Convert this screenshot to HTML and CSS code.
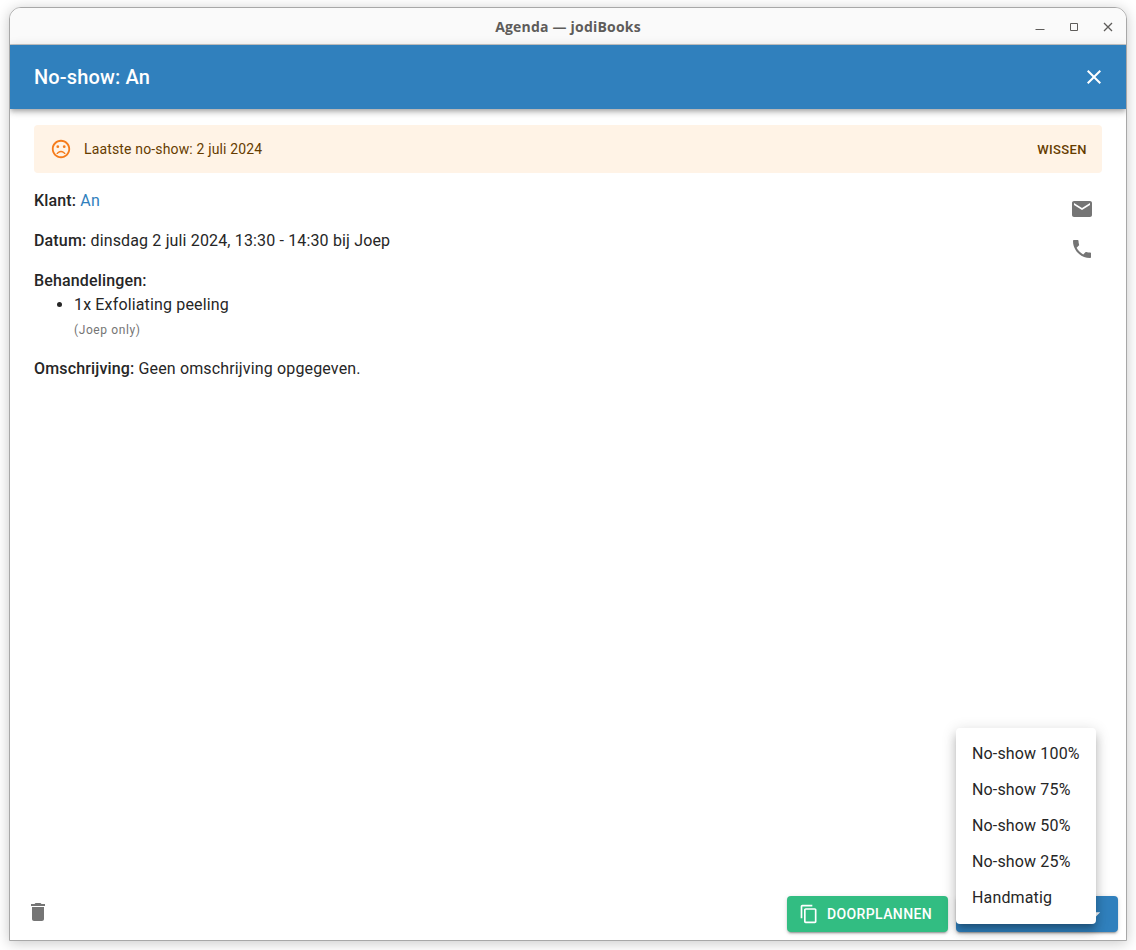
FILE: index.html
```html
<!DOCTYPE html>
<html lang="en">
<head>
  <meta charset="UTF-8">
  <meta name="viewport" content="width=device-width, initial-scale=1.0">
  <title>Agenda — jodiBooks</title>
  <link rel="stylesheet" href="styles.css">
</head>
<body>
  <div class="window">
    <!-- Title bar -->
    <div class="titlebar">
      <span class="titlebar-title">Agenda — jodiBooks</span>
      <div class="titlebar-controls">
        <svg class="win-icon" viewBox="0 0 10 10"><path d="M0.5 7.5h9" /></svg>
        <svg class="win-icon" viewBox="0 0 10 10"><path d="M1.5 1.5h7v7h-7z" /></svg>
        <svg class="win-icon win-close" viewBox="0 0 10 10"><path d="M1 1l8 8M9 1l-8 8" /></svg>
      </div>
    </div>

    <!-- Dialog header -->
    <header class="dialog-header">
      <h1>No-show: An</h1>
      <svg class="icon close-icon" viewBox="0 0 24 24"><path d="M19 6.41 17.59 5 12 10.59 6.41 5 5 6.41 10.59 12 5 17.59 6.41 19 12 13.41 17.59 19 19 17.59 13.41 12z" /></svg>
    </header>

    <main class="dialog-content">
      <div class="alert">
        <svg class="icon alert-icon" viewBox="0 0 24 24">
          <circle cx="15.5" cy="9.5" r="1.5" />
          <circle cx="8.5" cy="9.5" r="1.5" />
          <path d="M12 14c-2.33 0-4.32 1.45-5.12 3.5h1.67c.69-1.19 1.97-2 3.45-2s2.75.81 3.45 2h1.67c-.8-2.05-2.79-3.5-5.12-3.5zm-.01-12C6.47 2 2 6.48 2 12s4.47 10 9.99 10C17.52 22 22 17.52 22 12S17.52 2 11.99 2zM12 20c-4.42 0-8-3.58-8-8s3.58-8 8-8 8 3.58 8 8-3.58 8-8 8z" />
        </svg>
        <span class="alert-text">Laatste no-show: 2 juli 2024</span>
        <span class="alert-action">Wissen</span>
      </div>

      <div class="details">
        <div class="details-text">
          <p><strong>Klant:</strong> <a href="#">An</a></p>
          <p><strong>Datum:</strong> dinsdag 2 juli 2024, 13:30 - 14:30 bij Joep</p>
          <div class="treatments">
            <strong>Behandelingen:</strong>
            <ul>
              <li>1x Exfoliating peeling<small>(Joep only)</small></li>
            </ul>
          </div>
          <p><strong>Omschrijving:</strong> Geen omschrijving opgegeven.</p>
        </div>
        <div class="details-actions">
          <svg class="icon grey-icon" viewBox="0 0 24 24"><path d="M20 4H4c-1.1 0-1.99.9-1.99 2L2 18c0 1.1.9 2 2 2h16c1.1 0 2-.9 2-2V6c0-1.1-.9-2-2-2zm0 4l-8 5-8-5V6l8 5 8-5v2z" /></svg>
          <svg class="icon grey-icon" viewBox="0 0 24 24"><path d="M6.62 10.79c1.44 2.83 3.76 5.14 6.59 6.59l2.2-2.2c.27-.27.67-.36 1.02-.24 1.12.37 2.33.57 3.57.57.55 0 1 .45 1 1V20c0 .55-.45 1-1 1-9.39 0-17-7.61-17-17 0-.55.45-1 1-1h3.5c.55 0 1 .45 1 1 0 1.25.2 2.45.57 3.57.11.35.03.74-.25 1.02l-2.2 2.2z" /></svg>
        </div>
      </div>
    </main>

    <!-- Footer buttons -->
    <footer class="dialog-footer">
      <svg class="icon grey-icon trash-icon" viewBox="0 0 24 24"><path d="M6 19c0 1.1.9 2 2 2h8c1.1 0 2-.9 2-2V7H6v12zM19 4h-3.5l-1-1h-5l-1 1H5v2h14V4z" /></svg>
      <div class="footer-buttons">
        <button class="btn btn-green" type="button">
          <svg class="icon btn-icon" viewBox="0 0 24 24"><path d="M16 1H4c-1.1 0-2 .9-2 2v14h2V3h12V1zm3 4H8c-1.1 0-2 .9-2 2v14c0 1.1.9 2 2 2h11c1.1 0 2-.9 2-2V7c0-1.1-.9-2-2-2zm0 16H8V7h11v14z" /></svg>
          Doorplannen
        </button>
        <button class="btn btn-blue" type="button">
          No-show
          <svg class="icon btn-icon" viewBox="0 0 24 24"><path d="M7 10l5 5 5-5z" /></svg>
        </button>
      </div>
    </footer>

    <!-- Open no-show menu -->
    <ul class="menu">
      <li>No-show 100%</li>
      <li>No-show 75%</li>
      <li>No-show 50%</li>
      <li>No-show 25%</li>
      <li>Handmatig</li>
    </ul>
  </div>
</body>
</html>
```

FILE: styles.css
```css
* {
  box-sizing: border-box;
}

html,
body {
  height: 100%;
}

body {
  margin: 0;
  padding: 7px 9px 9px;
  background-color: #fff;
  font-family: Roboto, "Liberation Sans", sans-serif;
  font-size: 16px;
  line-height: 24px;
  letter-spacing: 0.15px;
  color: #262626;
}

.icon {
  display: block;
  width: 24px;
  height: 24px;
  fill: currentColor;
  flex: none;
}

.grey-icon {
  color: #757575;
}

/* Window */
.window {
  position: relative;
  display: flex;
  flex-direction: column;
  height: 100%;
  border: 1px solid #a8a8a8;
  border-radius: 12px 12px 0 0;
  background-color: #fff;
  box-shadow: 0 2px 14px rgba(0, 0, 0, 0.22);
  overflow: hidden;
}

.titlebar {
  position: relative;
  display: flex;
  align-items: center;
  justify-content: center;
  flex: none;
  height: 37px;
  padding-top: 2px;
  background-color: #fafafa;
  border-bottom: 1px solid #c8c8c8;
}

.titlebar-title {
  font-family: "Open Sans", "Noto Sans", sans-serif;
  font-size: 14px;
  font-weight: 700;
  letter-spacing: 0.2px;
  color: #5e5c5a;
}

.titlebar-controls {
  position: absolute;
  top: 14px;
  right: 13px;
  display: flex;
  gap: 24px;
}

.win-icon {
  width: 10px;
  height: 10px;
  fill: none;
  stroke: #5e5c5a;
  stroke-width: 1;
}

.win-close {
  stroke-width: 1.3;
}

/* Dialog header */
.dialog-header {
  position: relative;
  display: flex;
  align-items: center;
  justify-content: space-between;
  flex: none;
  height: 64px;
  padding: 0 20px 0 24px;
  background-color: #3080bd;
  color: #fff;
  box-shadow: 0 2px 4px -1px rgba(0, 0, 0, 0.2), 0 4px 5px rgba(0, 0, 0, 0.14), 0 1px 10px rgba(0, 0, 0, 0.12);
}

.dialog-header h1 {
  margin: 0;
  font-size: 20px;
  font-weight: 500;
  line-height: 32px;
  letter-spacing: 0.15px;
}

.close-icon {
  color: #fff;
}

.dialog-content {
  flex: 1;
  padding: 16px 24px 0;
}

/* Alert */
.alert {
  display: flex;
  align-items: center;
  height: 48px;
  padding: 0 15px 0 16px;
  border-radius: 4px;
  background-color: #fff3e6;
  color: #663c00;
  font-size: 14px;
  letter-spacing: 0.15px;
}

.alert-icon {
  width: 22px;
  height: 22px;
  margin-right: 12px;
  color: #f57c1c;
}

.alert-text {
  flex: 1;
}

.alert-action {
  padding-top: 2px;
  font-size: 13px;
  font-weight: 500;
  letter-spacing: 0.4px;
  text-transform: uppercase;
}

/* Details */
.details {
  display: flex;
  justify-content: space-between;
  margin-top: 16px;
}

.details-text p {
  margin: 0 0 16px;
}

.details-text strong {
  font-weight: 500;
}

.details-text a {
  color: #3080bd;
  text-decoration: none;
}

.treatments {
  margin-bottom: 16px;
}

.treatments ul {
  margin: 0;
  padding-left: 40px;
}

.treatments small {
  display: block;
  padding-top: 2px;
  font-size: 12px;
  line-height: 22px;
  letter-spacing: 0.6px;
  color: #757575;
}

.details-actions {
  display: flex;
  flex-direction: column;
  gap: 16px;
  margin: 8px 8px 0 0;
}

/* Footer */
.dialog-footer {
  display: flex;
  align-items: center;
  justify-content: space-between;
  flex: none;
  padding: 0 8px 8px 16px;
}

.trash-icon {
  margin-bottom: 4px;
}

.footer-buttons {
  display: flex;
  gap: 8px;
}

.btn {
  display: flex;
  align-items: center;
  justify-content: center;
  height: 36px;
  padding: 0 16px 0 12px;
  border: none;
  border-radius: 4px;
  color: #fff;
  font-family: inherit;
  font-size: 14px;
  font-weight: 500;
  letter-spacing: 0.4px;
  text-transform: uppercase;
  box-shadow: 0 3px 1px -2px rgba(0, 0, 0, 0.2), 0 2px 2px rgba(0, 0, 0, 0.14), 0 1px 5px rgba(0, 0, 0, 0.12);
}

.btn-icon {
  width: 20px;
  height: 20px;
}

.btn-green {
  gap: 8px;
  width: 161px;
  background-color: #32bd82;
}

.btn-blue {
  gap: 8px;
  width: 162px;
  justify-content: flex-end;
  padding-right: 12px;
  background-color: #3080bd;
}

/* Menu */
.menu {
  position: absolute;
  right: 30px;
  bottom: 16px;
  width: 140px;
  margin: 0;
  padding: 8px 0;
  list-style: none;
  border-radius: 4px;
  background-color: #fff;
  box-shadow: 0 5px 5px -3px rgba(0, 0, 0, 0.2), 0 8px 10px 1px rgba(0, 0, 0, 0.14), 0 3px 14px 2px rgba(0, 0, 0, 0.12);
}

.menu li {
  display: flex;
  align-items: center;
  height: 36px;
  padding: 0 16px;
  white-space: nowrap;
}
```
